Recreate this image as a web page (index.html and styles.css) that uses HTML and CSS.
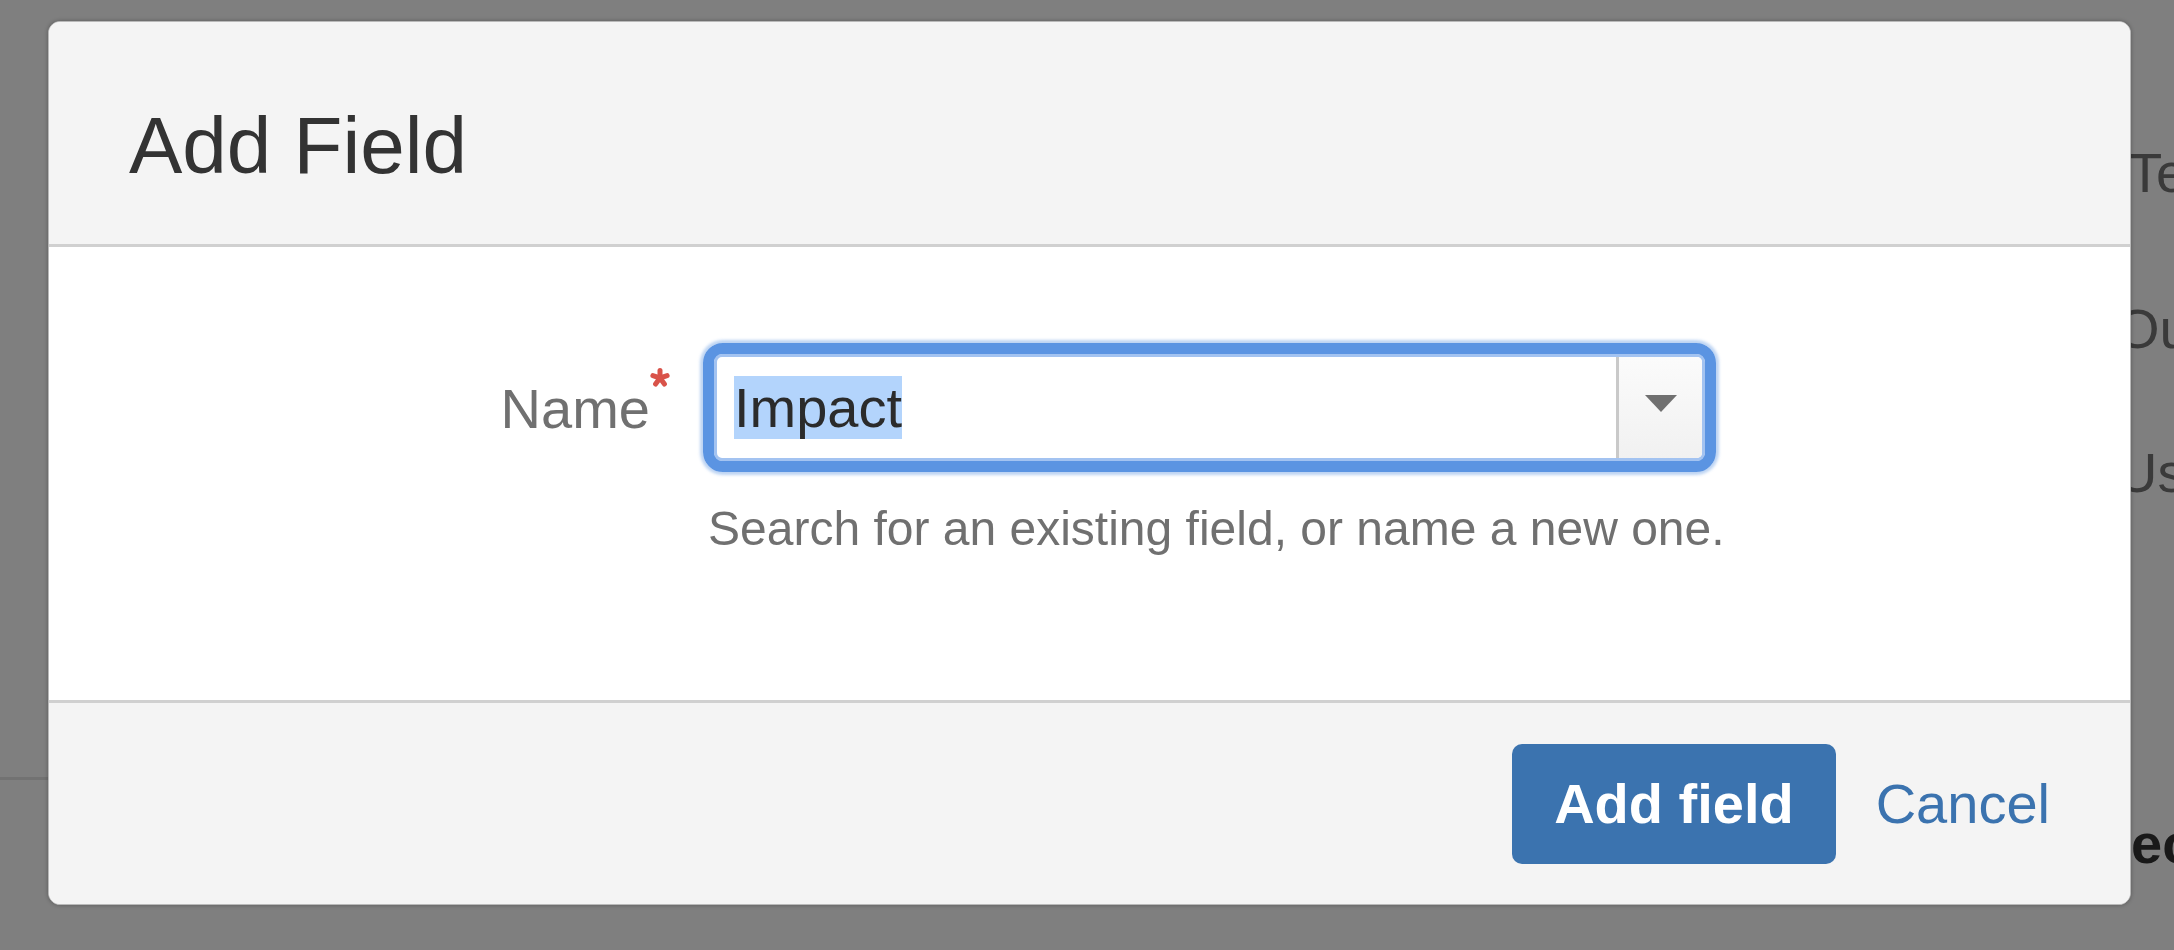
FILE: index.html
```html
<!DOCTYPE html>
<html lang="en">
<head>
<meta charset="utf-8">
<title>Add Field</title>
<link rel="stylesheet" href="styles.css">
</head>
<body>
<div class="page">
  <main class="page-main">
    <div class="page-band"></div>
  </main>
  <aside class="page-side">
    <div class="side-item side-first">Text Field</div>
    <div class="side-item side-second">Outcome</div>
    <div class="side-item side-third">User Picker</div>
    <div class="side-item side-heading">Selected</div>
  </aside>
</div>
<div class="overlay"></div>
<section class="dialog" role="dialog" aria-labelledby="dlg-title">
  <header class="dialog-header">
    <h2 class="dialog-title" id="dlg-title">Add Field</h2>
  </header>
  <div class="dialog-body">
    <div class="form-row">
      <label class="field-label" for="field-name">
        <span class="label-text">Name</span>
        <svg class="req" width="20" height="20" viewBox="-10 -10 20 20" aria-label="required">
          <g stroke="#d9534a" stroke-width="5" stroke-linecap="round">
            <line x1="0" y1="0" x2="0" y2="-7.5"/>
            <line x1="0" y1="0" x2="7.13" y2="-2.32"/>
            <line x1="0" y1="0" x2="4.41" y2="6.07"/>
            <line x1="0" y1="0" x2="-4.41" y2="6.07"/>
            <line x1="0" y1="0" x2="-7.13" y2="-2.32"/>
          </g>
        </svg>
      </label>
      <div class="field">
        <div class="combo">
          <div class="combo-box">
            <div class="combo-input" id="field-name"><span class="sel">Impact</span></div>
            <button class="combo-toggle" type="button" aria-label="Show suggestions">
              <svg width="32" height="17" viewBox="0 0 32 17"><polygon points="0,0 32,0 16,17" fill="#707070"/></svg>
            </button>
          </div>
        </div>
        <div class="hint">Search for an existing field, or name a new one.</div>
      </div>
    </div>
  </div>
  <footer class="dialog-footer">
    <button class="btn-primary" type="button">Add field</button>
    <button class="btn-link" type="button">Cancel</button>
  </footer>
</section>
</body>
</html>
```
FILE: styles.css
```css
html, body {
  margin: 0;
  padding: 0;
}
body {
  width: 2174px;
  height: 950px;
  overflow: hidden;
  background: #ffffff;
  font-family: "Liberation Sans", Arial, sans-serif;
  color: #333333;
}

/* page behind the modal */
.page {
  display: grid;
  grid-template-columns: 2110px 1fr;
  height: 950px;
}
.page-band {
  height: 777px;
  border-bottom: 3px solid #e4e4e4;
}
.page-side {
  font-size: 56px;
  line-height: 64px;
  color: #747474;
  white-space: nowrap;
  overflow: hidden;
}
.side-first { margin-top: 141px; margin-left: 18px; }
.side-second { margin-top: 92px; margin-left: 6px; }
.side-third { margin-top: 80px; margin-left: 7px; }
.side-heading {
  margin-top: 307px;
  margin-left: -63px;
  font-weight: bold;
  color: #333333;
}

.overlay {
  position: fixed;
  inset: 0;
  background: rgba(0, 0, 0, 0.5);
}

/* dialog */
.dialog {
  position: absolute;
  top: 21px;
  left: 48px;
  width: 2083px;
  box-sizing: border-box;
  border: 1px solid #b9b9b9;
  border-radius: 12px;
  overflow: hidden;
  background: #ffffff;
  box-shadow: 0 0 4px rgba(0, 0, 0, 0.3);
}
.dialog-header {
  background: #f4f4f4;
  padding: 78px 0 52px 80px;
  border-bottom: 3px solid #d0d0d0;
}
.dialog-title {
  margin: 0;
  font-size: 80px;
  line-height: 92px;
  font-weight: normal;
  color: #333333;
}

.dialog-body {
  padding: 96px 0 143px 0;
}
.form-row {
  display: grid;
  grid-template-columns: 621px 1013px;
  column-gap: 33px;
  align-items: start;
}
.field-label {
  display: flex;
  justify-content: flex-end;
  align-items: flex-start;
  padding-top: 25px;
  font-size: 56px;
  line-height: 64px;
  color: #707070;
}
.label-text {
  padding-top: 9px;
}
.req {
  display: block;
  flex: none;
}

.combo {
  border: 11px solid #5b94e2;
  border-radius: 20px;
  box-shadow: 0 0 3px 3px rgba(91, 148, 226, 0.4);
}
.combo-box {
  display: flex;
  border: 3px solid #a3c3f1;
  border-radius: 8px;
  overflow: hidden;
  background: #ffffff;
}
.combo-input {
  flex: 1;
  padding: 19px 17px 18px 17px;
  font-size: 56px;
  line-height: 64px;
  color: #2b2b2b;
  white-space: nowrap;
}
.sel {
  background: #b3d4fc;
}
.combo-toggle {
  flex: none;
  width: 86px;
  box-sizing: border-box;
  margin: 0;
  padding: 0 0 8px 0;
  border: none;
  border-left: 3px solid #c9c9c9;
  background: linear-gradient(#fbfbfb, #f1f1f1);
  display: flex;
  align-items: center;
  justify-content: center;
}
.combo-toggle svg {
  display: block;
}

.hint {
  margin: 29px 0 0 5px;
  font-size: 48px;
  line-height: 56px;
  color: #707070;
  white-space: nowrap;
}

/* footer */
.dialog-footer {
  display: flex;
  justify-content: flex-end;
  align-items: center;
  background: #f4f4f4;
  border-top: 3px solid #d0d0d0;
  padding: 41px 40px 40px 40px;
}
.btn-primary {
  margin: 0;
  padding: 28px 42px;
  border: none;
  border-radius: 10px;
  background: #3b73af;
  color: #ffffff;
  font-family: "Liberation Sans", Arial, sans-serif;
  font-size: 56px;
  line-height: 64px;
  font-weight: bold;
}
.btn-link {
  margin: 0;
  padding: 28px 40px;
  border: none;
  background: none;
  color: #3b73af;
  font-family: "Liberation Sans", Arial, sans-serif;
  font-size: 56px;
  line-height: 64px;
}
```
